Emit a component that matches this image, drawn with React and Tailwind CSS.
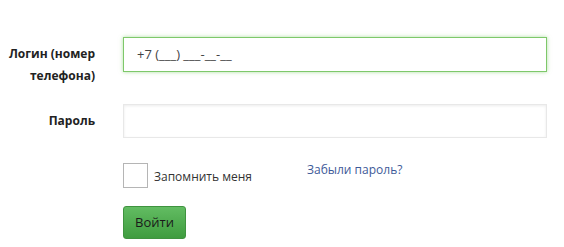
export default function App() {
  const font = { fontFamily: '"Open Sans", "Noto Sans", sans-serif' };
  return (
    <div className="w-[564px] h-[247px] bg-white overflow-hidden" style={font}>
      <div className="pt-[37px] flex flex-col">
        <div className="flex items-start h-[35px]">
          <div className="w-[95px] shrink-0 text-right text-[12px] font-bold leading-[22px] text-[#222] pt-[6px] whitespace-nowrap">
            Логин (номер
            <br />
            телефона)
          </div>
          <div className="ml-[28px] w-[424px] h-[35px] border border-[#7ec86a] shadow-[0_0_4px_rgba(120,200,100,0.6)] flex items-center pl-[13px] text-[13px] text-[#444]">
            +7 (___) ___-__-__
          </div>
        </div>
        <div className="flex items-center mt-[32px]">
          <div className="w-[95px] shrink-0 text-right text-[12px] font-bold text-[#222]">Пароль</div>
          <div className="ml-[28px] w-[424px] h-[34px] border border-[#e8e8e8] shadow-[inset_0_1px_3px_rgba(0,0,0,0.08)]"></div>
        </div>
        <div className="flex items-start mt-[25px] ml-[123px] h-[25px]">
          <div className="w-[25px] h-[25px] border border-[#b5b5b5] bg-white"></div>
          <div className="ml-[6px] mt-[5px] text-[12px] leading-[18px] text-[#333]">Запомнить меня</div>
          <div className="ml-[55px] -mt-[2px] text-[12px] leading-[18px] text-[#3d5a98]">Забыли пароль?</div>
        </div>
        <div className="mt-[18px] ml-[123px]">
          <button className="w-[63px] h-[33px] rounded-[3px] bg-[linear-gradient(to_bottom,#62bc62,#3f9c3f)] border border-[#3f933f] flex items-center justify-center text-[13px] text-[#1a1a1a]">
            Войти
          </button>
        </div>
      </div>
    </div>
  );
}
